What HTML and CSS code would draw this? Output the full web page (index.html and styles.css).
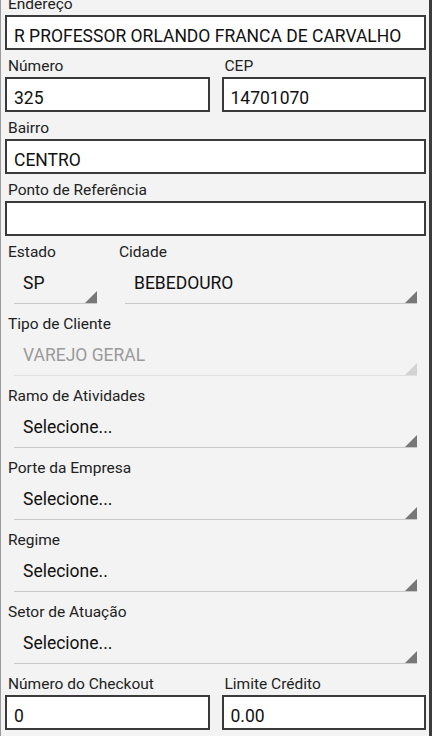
FILE: index.html
```html
<!DOCTYPE html>
<html lang="pt-BR">
<head>
    <meta charset="UTF-8">
    <title>Cadastro de Cliente</title>
    <link rel="stylesheet" href="styles.css">
</head>
<body>

<div class="screen">
    <form class="cadastro">

        <!-- Endereço -->
        <div class="field first">
            <label for="endereco">Endereço</label>
            <input type="text" id="endereco" value="R PROFESSOR ORLANDO FRANCA DE CARVALHO">
        </div>

        <div class="row">
            <div class="field">
                <label for="numero">Número</label>
                <input type="text" id="numero" value="325">
            </div>
            <div class="field">
                <label for="cep">CEP</label>
                <input type="text" id="cep" value="14701070">
            </div>
        </div>

        <div class="field">
            <label for="bairro">Bairro</label>
            <input type="text" id="bairro" value="CENTRO">
        </div>

        <div class="field">
            <label for="referencia">Ponto de Referência</label>
            <input type="text" id="referencia" value="">
        </div>

        <!-- Estado / Cidade -->
        <div class="row-uf">
            <div class="field">
                <label>Estado</label>
                <div class="spinner short">SP</div>
            </div>
            <div class="field">
                <label>Cidade</label>
                <div class="spinner">BEBEDOURO</div>
            </div>
        </div>

        <div class="field">
            <label>Tipo de Cliente</label>
            <div class="spinner disabled">VAREJO GERAL</div>
        </div>

        <div class="field">
            <label>Ramo de Atividades</label>
            <div class="spinner">Selecione...</div>
        </div>

        <div class="field">
            <label>Porte da Empresa</label>
            <div class="spinner">Selecione...</div>
        </div>

        <div class="field">
            <label>Regime</label>
            <div class="spinner">Selecione..</div>
        </div>

        <div class="field">
            <label>Setor de Atuação</label>
            <div class="spinner">Selecione...</div>
        </div>

        <div class="row">
            <div class="field">
                <label for="checkout">Número do Checkout</label>
                <input type="text" id="checkout" value="0">
            </div>
            <div class="field">
                <label for="limite">Limite Crédito</label>
                <input type="text" id="limite" value="0.00">
            </div>
        </div>

    </form>
</div>

</body>
</html>
```

FILE: styles.css
```css
/* Base */
body {
    margin: 0;
    background: #f3f3f3;
    font-family: Roboto, "Liberation Sans", sans-serif;
    color: #222;
}

.screen {
    height: 736px;
    overflow: hidden;
    border-left: 1px solid #9a9a9a;
    border-right: 3px solid #3c3c3c;
    box-sizing: border-box;
}

.cadastro {
    padding: 0 3px 0 4px;
    margin-top: -12px;
}

/* Campos */
.field {
    padding-top: 7px;
}

label {
    display: block;
    height: 18px;
    line-height: 18px;
    padding-left: 3px;
    margin-bottom: 2px;
    font-size: 15.5px;
    color: #222;
}

input {
    display: block;
    width: 100%;
    height: 35px;
    box-sizing: border-box;
    margin: 0;
    padding: 9px 7px 2px;
    border: 2px solid #3a3a3a;
    border-radius: 0;
    background: #fff;
    font-family: Roboto, "Liberation Sans", sans-serif;
    font-size: 17.5px;
    color: #111;
    outline: none;
}

.row {
    display: grid;
    grid-template-columns: 1fr 1fr;
    gap: 12px;
}

.row-uf {
    display: grid;
    grid-template-columns: 111px 1fr;
}

/* Spinners */
.spinner {
    position: relative;
    margin: 0 9px 4px;
    padding: 10px 9px 9px;
    height: 21px;
    line-height: 21px;
    font-size: 17.5px;
    color: #111;
    border-bottom: 1px solid #c8c8c8;
}

.spinner::after {
    content: '';
    position: absolute;
    right: 0;
    bottom: 0;
    width: 12px;
    height: 12px;
    background: #777;
    clip-path: polygon(100% 0, 100% 100%, 0 100%);
}

.spinner.short {
    width: 65px;
}

.spinner.disabled {
    color: #9a9a9a;
    border-bottom-color: #e0e0e0;
}

.spinner.disabled::after {
    background: #d2d2d2;
}
```
